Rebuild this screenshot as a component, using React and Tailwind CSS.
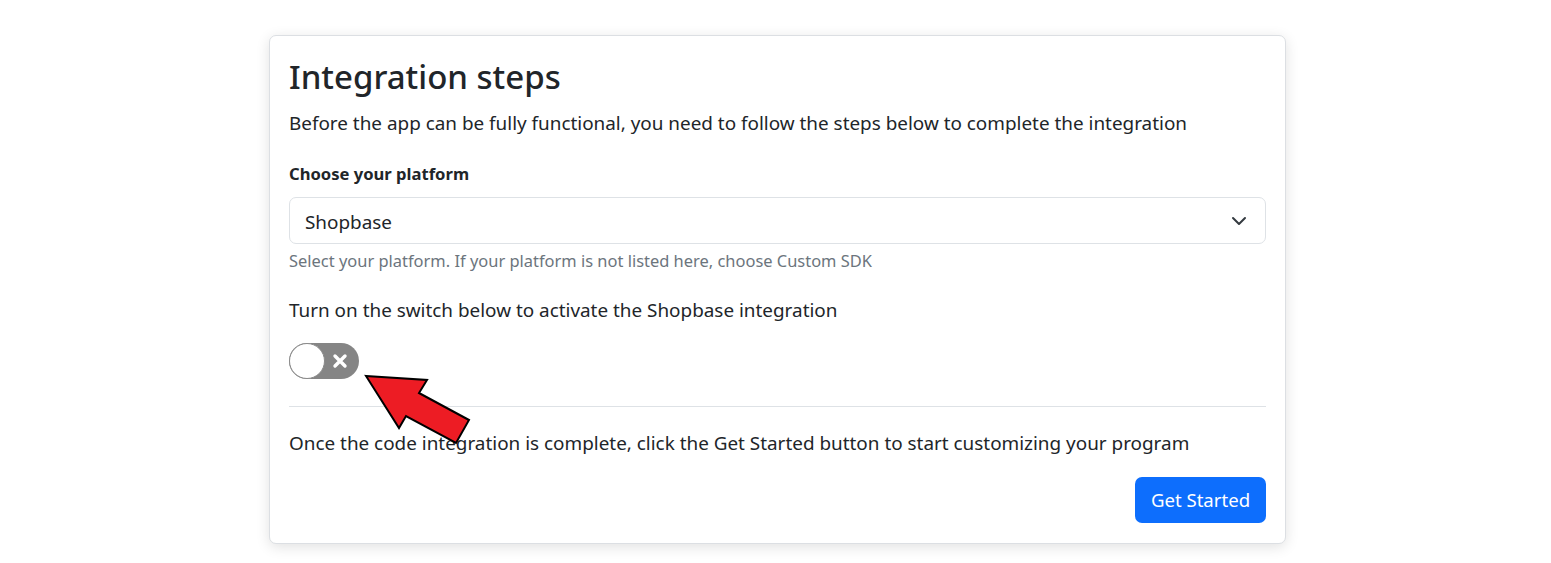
import React from "react";

const Arrow = () => (
  <svg
    className="absolute left-0 top-0 pointer-events-none"
    width="1017"
    height="509"
    viewBox="269 35 1017 509"
  >
    <polygon
      points="365,375 426,379 418,392 468,419 455,442 405,415 398,427"
      fill="#ed1c24"
      stroke="#000"
      strokeWidth="2"
      strokeLinejoin="miter"
    />
  </svg>
);

export default function App() {
  return (
    <div
      className="flex min-h-screen justify-center bg-white pt-[35px] pl-[4px] text-[#212529]"
      style={{ fontFamily: '"Noto Sans", "Open Sans", sans-serif' }}
    >
      <div className="relative h-fit w-[1017px] rounded-[7px] border border-[#dcdfe3] bg-white px-[19px] pt-[17px] pb-[20px] shadow-[0_3px_14px_rgba(0,0,0,0.12)]">
        <h1 className="text-[33px] leading-[48px] font-medium">Integration steps</h1>
        <p className="mt-[9px] text-[18.9px] leading-[27px]">
          Before the app can be fully functional, you need to follow the steps below to complete the integration
        </p>

        <label className="mt-[23px] block text-[16.6px] leading-[27px] font-bold">
          Choose your platform
        </label>
        <div className="mt-[10px] flex h-[47px] items-center justify-between rounded-[7px] border border-[#dee2e6] pl-[15px] pr-[18px]">
          <span className="pt-[3px] text-[18.9px]">Shopbase</span>
          <svg width="16" height="16" viewBox="0 0 16 16" fill="none">
            <path d="M2 5l6 6 6-6" stroke="#343a40" strokeWidth="2" strokeLinecap="round" strokeLinejoin="round" />
          </svg>
        </div>
        <p className="mt-[5px] text-[16.45px] leading-[24px] text-[#6c757d]">
          Select your platform. If your platform is not listed here, choose Custom SDK
        </p>

        <p className="mt-[24px] text-[18.9px] leading-[27px]">
          Turn on the switch below to activate the Shopbase integration
        </p>
        <div className="mt-[19px] flex h-[36px] w-[70px] items-center rounded-full bg-[#858585]">
          <div className="h-[36px] w-[36px] rounded-full border border-[#8a8a8a] bg-white" />
          <div className="flex flex-1 items-center justify-center pr-[4px]">
            <svg width="16" height="16" viewBox="0 0 16 16">
              <path d="M3 3l10 10M13 3L3 13" stroke="#fff" strokeWidth="3.4" strokeLinecap="round" />
            </svg>
          </div>
        </div>

        <hr className="mt-[27px] border-t border-[#dee2e6]" />

        <p className="mt-[23px] text-[18.9px] leading-[27px]">
          Once the code integration is complete, click the Get Started button to start customizing your program
        </p>
        <div className="mt-[20px] flex justify-end">
          <button className="h-[46px] w-[131px] rounded-[7px] bg-[#0d6efd] text-[18.6px] text-white">
            Get Started
          </button>
        </div>

        <Arrow />
      </div>
    </div>
  );
}
